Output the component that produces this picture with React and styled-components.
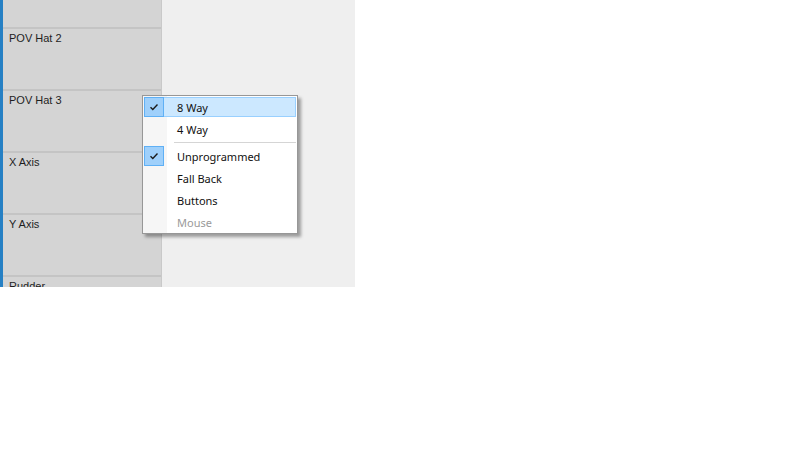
import React from "react";
import styled, { createGlobalStyle } from "styled-components";

const GlobalStyle = createGlobalStyle`
  html, body {
    margin: 0;
    padding: 0;
    background: #ffffff;
  }
`;

const rows = ["", "POV Hat 2", "POV Hat 3", "X Axis", "Y Axis", "Rudder"];

const items = [
  { label: "8 Way", checked: true, active: true },
  { label: "4 Way" },
  { separator: true },
  { label: "Unprogrammed", checked: true },
  { label: "Fall Back" },
  { label: "Buttons" },
  { label: "Mouse", disabled: true },
];

const Check = () => (
  <svg width="10" height="8" viewBox="0 0 10 8">
    <path d="M1.5 4.2 L3.8 6.4 L8.5 1.6" fill="none" stroke="#1a1a1a" strokeWidth="1.4" />
  </svg>
);

const App = () => {
  return (
    <>
      <GlobalStyle />
      <Screen>
        <Column>
          {rows.map((r, i) => (
            <Row key={i} first={i === 0}>
              {r}
            </Row>
          ))}
        </Column>
        <Pane />
        <Menu>
          {items.map((it, i) =>
            it.separator ? (
              <Separator key={i} />
            ) : (
              <Item key={i} active={it.active} disabled={it.disabled}>
                <Gutter>
                  {it.checked && (
                    <CheckBox>
                      <Check />
                    </CheckBox>
                  )}
                </Gutter>
                <Label>{it.label}</Label>
              </Item>
            )
          )}
        </Menu>
      </Screen>
    </>
  );
};

const Screen = styled.div`
  position: relative;
  width: 355px;
  height: 287px;
  overflow: hidden;
  display: flex;
  background: #efefef;
`;

const Column = styled.div`
  width: 158px;
  flex-shrink: 0;
  background: #d4d4d4;
  border-left: 3px solid #2680c4;
  border-right: 1px solid #c9c9c9;
  display: flex;
  flex-direction: column;
`;

const Row = styled.div`
  height: ${(p) => (p.first ? "27px" : "57px")};
  flex-shrink: 0;
  padding: ${(p) => (p.first ? "0" : "3px")} 0 0 6px;
  box-sizing: content-box;
  font-family: "Liberation Sans", Arial, sans-serif;
  font-size: 11px;
  line-height: 13px;
  color: #1e1e1e;
  border-bottom: 2px solid #c4c4c4;
`;

const Pane = styled.div`
  flex: 1;
  background: #efefef;
`;

const Menu = styled.div`
  position: absolute;
  left: 142px;
  top: 95px;
  width: 152px;
  padding: 1px;
  border: 1px solid #979797;
  box-shadow: 3px 3px 3px rgba(0, 0, 0, 0.35);
  display: flex;
  flex-direction: column;
  background: linear-gradient(to right, #f6f6f6 0, #f6f6f6 24px, #ffffff 24px);
`;

const Item = styled.div`
  height: 20px;
  margin-bottom: 2px;
  display: flex;
  align-items: center;
  box-sizing: border-box;
  border: 1px solid ${(p) => (p.active ? "#99d0ff" : "transparent")};
  background: ${(p) => (p.active ? "#cce8ff" : "transparent")};
  font-family: "Noto Sans", "Open Sans", sans-serif;
  font-size: 11px;
  color: ${(p) => (p.disabled ? "#9a9a9a" : "#111111")};

  &:last-child {
    margin-bottom: 0;
  }
`;

const Gutter = styled.div`
  width: 21px;
  height: 20px;
  margin-left: -1px;
  flex-shrink: 0;
  display: flex;
  align-items: center;
`;

const CheckBox = styled.div`
  width: 20px;
  height: 20px;
  box-sizing: border-box;
  background: #9fd0fb;
  border: 1px solid #5fb0f5;
  display: flex;
  align-items: center;
  justify-content: center;
`;

const Label = styled.span`
  margin-left: 12px;
  white-space: nowrap;
`;

const Separator = styled.div`
  height: 1px;
  margin: 1px 0 3px 30px;
  background: #d5d5d5;
`;

export default App;
